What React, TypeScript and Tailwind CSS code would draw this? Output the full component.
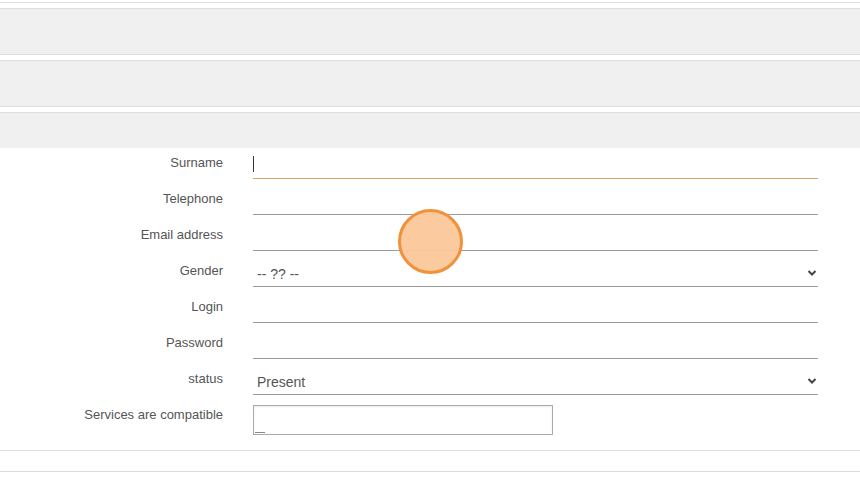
export default function App() {
  const rows = [
    { label: 'Surname', kind: 'text', focus: true },
    { label: 'Telephone', kind: 'text' },
    { label: 'Email address', kind: 'text' },
    { label: 'Gender', kind: 'select', value: '-- ?? --' },
    { label: 'Login', kind: 'text' },
    { label: 'Password', kind: 'text' },
    { label: 'status', kind: 'select', value: 'Present' },
  ];

  return (
    <div className="relative w-[860px] h-[481px] overflow-hidden bg-white font-['Liberation_Sans',Arial,sans-serif]">
      {/* Previous panel edge */}
      <div className="h-[3px] border-b border-[#dddddd]" />

      {/* Collapsed panels */}
      <div className="mt-[5px] h-[47px] border-y border-[#dddddd] bg-[#f0f0f0]" />
      <div className="mt-[5px] h-[47px] border-y border-[#dddddd] bg-[#f0f0f0]" />

      {/* Open panel */}
      <div className="mt-[5px] border-y border-[#dddddd]">
        <div className="h-[35px] bg-[#f0f0f0]" />
        <div className="pb-[15px] text-[#555555]">
          {rows.map((r) => (
            <div key={r.label} className="flex h-[36px] items-start">
              <div className="w-[223px] pt-[7px] text-right text-[13px] leading-[15px]">{r.label}</div>
              <div
                className={`relative ml-[30px] mt-px flex h-[30px] w-[565px] items-center border-b ${
                  r.focus ? 'border-[#dea46c]' : 'border-[#9a9a9a]'
                }`}
              >
                {r.focus && <div className="h-[16px] w-px bg-[#333333]" />}
                {r.kind === 'select' && (
                  <>
                    <span className="mt-[5px] pl-[4px] text-[14px] leading-[16px] text-[#555555]">{r.value}</span>
                    <svg
                      className="absolute right-[1px] top-[12px]"
                      width="10"
                      height="8"
                      viewBox="0 0 10 8"
                      fill="none"
                    >
                      <path d="M1.5 2 L5 5.5 L8.5 2" stroke="#444444" strokeWidth="2" />
                    </svg>
                  </>
                )}
              </div>
            </div>
          ))}
          <div className="flex items-start">
            <div className="w-[223px] pt-[7px] text-right text-[13px] leading-[15px]">Services are compatible</div>
            <div className="relative ml-[30px] mt-[5px] h-[30px] w-[300px] border border-[#a9a9a9] shadow-[inset_0_1px_2px_rgba(0,0,0,0.08)]">
              <div className="absolute bottom-[1px] left-px h-px w-[10px] bg-[#888888]" />
            </div>
          </div>
        </div>
      </div>

      {/* Next panel edge */}
      <div className="mt-[20px] border-t border-[#dddddd]" />

      {/* Touch indicator */}
      <div className="absolute left-[398px] top-[209px] h-[65px] w-[65px] rounded-full border-[3px] border-[#f0923c] bg-[#fbc79a]/95" />
    </div>
  );
}
